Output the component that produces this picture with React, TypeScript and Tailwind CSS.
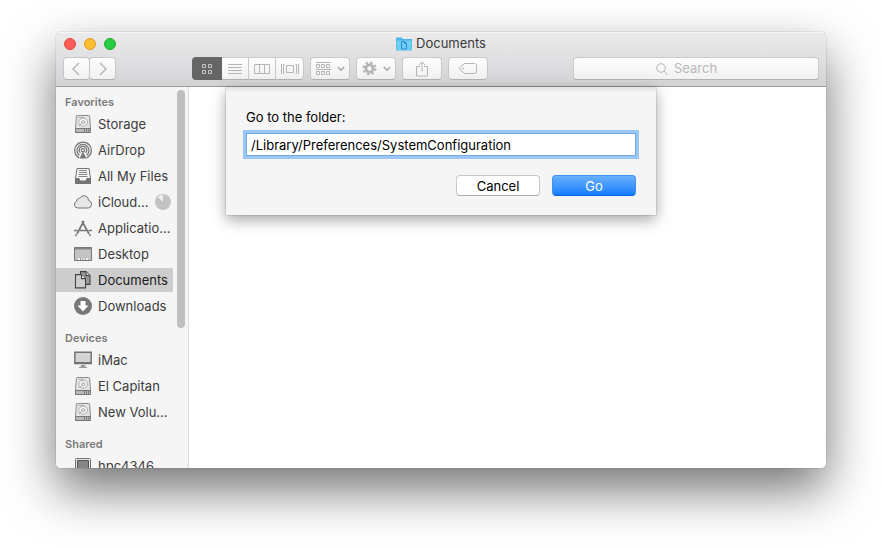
import type { ReactNode } from "react";

const toolButton =
  "flex h-[23px] items-center justify-center rounded-[4px] border border-[#c9c7c9] border-b-[#b4b2b4] bg-linear-to-b from-[#fdfdfd] to-[#f2f1f2] text-[#b5b5b5]";

function Chevron({ d }: { d: string }) {
  return (
    <svg width="16" height="16" viewBox="0 0 16 16" fill="none" stroke="currentColor" strokeWidth="1.4">
      <path d={d} />
    </svg>
  );
}

function ChevronDown() {
  return (
    <svg width="8" height="6" viewBox="0 0 8 6" fill="none" stroke="#a8a8a8" strokeWidth="1.5">
      <path d="M0.8 1L4 4.2L7.2 1" />
    </svg>
  );
}

function GridIcon() {
  return (
    <svg width="12" height="12" viewBox="0 0 12 12" fill="none" stroke="#c8c8c8" strokeWidth="1">
      <path d="M1.5 1.5h3v3h-3zM7.5 1.5h3v3h-3zM1.5 7.5h3v3h-3zM7.5 7.5h3v3h-3z" />
    </svg>
  );
}

function ListIcon() {
  return (
    <svg width="14" height="12" viewBox="0 0 14 12" stroke="currentColor">
      <path d="M0 1.5h14M0 4.5h14M0 7.5h14M0 10.5h14" />
    </svg>
  );
}

function ColumnsIcon() {
  return (
    <svg width="16" height="12" viewBox="0 0 16 12" fill="none" stroke="currentColor">
      <path d="M0.5 1.5h15v9h-15zM5.5 1.5v9M10.5 1.5v9" />
    </svg>
  );
}

function CoverFlowIcon() {
  return (
    <svg width="18" height="12" viewBox="0 0 18 12" fill="none" stroke="currentColor">
      <path d="M5.5 2.5h7v7h-7zM0.5 1v10M2.5 1.5v9M15.5 1.5v9M17.5 1v10M2.5 1.5h1M2.5 10.5h1M15.5 1.5h-1M15.5 10.5h-1" />
    </svg>
  );
}

function ArrangeIcon() {
  return (
    <svg width="15" height="14" viewBox="0 0 15 14" fill="none" stroke="currentColor">
      <path d="M0 0.5h15M0 7.5h15M0.5 2.5h3v3h-3zM5.5 2.5h3v3h-3zM10.5 2.5h3v3h-3zM0.5 9.5h3v3h-3zM5.5 9.5h3v3h-3zM10.5 9.5h3v3h-3z" />
    </svg>
  );
}

function GearIcon() {
  return (
    <svg width="15" height="15" viewBox="0 0 15 15" fill="none" stroke="currentColor">
      <circle cx="7.5" cy="7.5" r="3.600" strokeWidth="2.800" />
      <circle cx="7.5" cy="7.5" r="5.900" strokeWidth="2.200" strokeDasharray="2.317 2.317" />
    </svg>
  );
}

function ShareIcon() {
  return (
    <svg width="12" height="16" viewBox="0 0 12 16" fill="none" stroke="currentColor">
      <path d="M4 5.500H0.500v9.500h11V5.500H8M6 10.500V1M3 4L6 1l3 3" />
    </svg>
  );
}

function TagIcon() {
  return (
    <svg width="18" height="11" viewBox="0 0 18 11" fill="none" stroke="currentColor">
      <path d="M5.500 0.500H15.500a2 2 0 0 1 2 2v6a2 2 0 0 1 -2 2H5.500L1.200 7a2 2 0 0 1 0 -3z" />
      <circle cx="4" cy="5.500" r="0.600" />
    </svg>
  );
}

function FolderIcon() {
  return (
    <svg width="16" height="14" viewBox="0 0 16 14">
      <path d="M0 1.500Q0 0.500 1 0.500h4.500l1.500 1.500H15.500q.5 0 .5.500V13.500H0z" fill="#4bb4e6" />
      <path d="M0.500 3.500h15v9.500h-15z" fill="#70cdf6" />
      <path d="M5.500 4.500h3l2 2v5.500h-5zM8.500 4.500v2h2" fill="none" stroke="#2690cf" />
    </svg>
  );
}

function DiskIcon() {
  return (
    <svg width="18" height="18" viewBox="0 0 18 18" fill="none" stroke="#8a8a8a">
      <path d="M3.200 0.500h11.600q.7 0 .8.700L16.500 13v4.500h-15V13L2.400 1.200q.1-.7.800-.7z" fill="#e4e4e4" />
      <path d="M1.500 13.500h15v4h-15z" fill="#b8b8b8" stroke="#777" />
      <ellipse cx="9.200" cy="7.200" rx="4.400" ry="4" stroke="#b0b0b0" fill="#f3f3f3" />
      <circle cx="9.300" cy="7.200" r="1.400" stroke="#a0a0a0" />
      <path d="M4.500 2.500h5M5 10.800L8 8.500" stroke="#aaa" />
      <path d="M10.500 14v3M12.500 14v3M14.500 14v3" stroke="#808080" />
    </svg>
  );
}

function AirDropIcon() {
  return (
    <svg width="18" height="18" viewBox="0 0 18 18" fill="none" stroke="#777" strokeWidth="1.300">
      <path d="M5.200 16.800A8.300 8.300 0 1 1 12.800 16.800" />
      <path d="M5.400 14.200A6 6 0 1 1 12.600 14.200" />
      <path d="M6.400 11.900A3.800 3.800 0 1 1 11.600 11.900" />
      <circle cx="9" cy="9.200" r="1.600" />
      <path d="M9 10.500L5.500 17.500h7z" fill="#777" stroke="none" />
    </svg>
  );
}

function TrayIcon() {
  return (
    <svg width="18" height="18" viewBox="0 0 18 18" fill="none" stroke="#737373">
      <path d="M3 1.500h12l1.500 10v5h-15v-5z" fill="#f5f5f5" />
      <path d="M5 3.500h8M4.800 5.500h8.400M4.600 7.500h8.800M4.400 9.500h9.200" stroke="#888" />
      <path d="M1.500 11.500h3.500l1 2.500h6l1-2.500h3.500v5h-15z" fill="#737373" />
    </svg>
  );
}

function CloudIcon() {
  return (
    <svg width="18" height="18" viewBox="0 0 18 18" fill="#e6e6e6" stroke="#777">
      <path d="M4 15a3.500 3.500 0 0 1-1.200-6.800a2.500 2.500 0 0 1 2.900-2.900a4.700 4.700 0 0 1 8.900 2.200a3.800 3.800 0 0 1 -.4 7.500z" />
    </svg>
  );
}

function ApplicationsIcon() {
  return (
    <svg width="18" height="18" viewBox="0 0 18 18" fill="none" stroke="#777" strokeWidth="1.700">
      <path d="M3 15L9.800 2M8 2l7 13M0 11.500h3.500M6 11.500h6M14.500 11.500H18M1.500 17l1-1.500M16.500 17l-1-1.500" />
    </svg>
  );
}

function DesktopIcon() {
  return (
    <svg width="18" height="18" viewBox="0 0 18 18">
      <path d="M0.500 2.500h17v13h-17z" fill="#c3c3c3" stroke="#777" />
      <path d="M1 3h16v1.500H1z" fill="#858585" />
      <path d="M4 13h10v2H4z" fill="#f2f2f2" />
      <path d="M6.500 13v2M9 13v2M11.500 13v2" stroke="#999" />
    </svg>
  );
}

function DocumentsIcon() {
  return (
    <svg width="18" height="18" viewBox="0 0 18 18" stroke="#444" strokeWidth="1.100">
      <path d="M6.500 0.600h5.500l4 4v8.800h-9.500z" fill="#999" />
      <path d="M12 0.600v4h4" fill="#ccc" />
      <path d="M1.500 3.600h6l4 4v9.300h-10z" fill="#cecece" />
      <path d="M7.500 3.600v4h4" fill="#e4e4e4" />
    </svg>
  );
}

function DownloadsIcon() {
  return (
    <svg width="18" height="18" viewBox="0 0 18 18">
      <circle cx="9" cy="9" r="9" fill="#787878" />
      <path d="M6.500 4h5v4.500h3L9 14.500L3.500 8.500h3z" fill="#fff" />
    </svg>
  );
}

function IMacIcon() {
  return (
    <svg width="18" height="18" viewBox="0 0 18 18">
      <path d="M0.800 1.300h16.400v11.200H0.800z" fill="#d4d4d4" stroke="#737373" strokeWidth="1.500" />
      <path d="M1 11h16v2H1z" fill="#737373" />
      <path d="M7 14h4l.5 2H13v1H5v-1h1.500z" fill="#999" />
    </svg>
  );
}

function PcIcon() {
  return (
    <svg width="18" height="18" viewBox="0 0 18 18">
      <rect x="1.500" y="1.500" width="15" height="14" rx="1" fill="#e6e6e6" stroke="#737373" />
      <path d="M3.500 3.500h11v10h-11z" fill="#858585" stroke="#555" />
    </svg>
  );
}

function ProgressPie() {
  return (
    <svg className="ml-auto mr-0.5" width="16" height="16" viewBox="0 0 16 16">
      <circle cx="8" cy="8" r="8" fill="#c3c3c3" />
      <path d="M8 8V1A7 7 0 0 0 3 3z" fill="#efefef" />
    </svg>
  );
}

type Item = { label: string; icon: ReactNode; selected?: boolean; extra?: ReactNode };

const sections: { title: string; items: Item[] }[] = [
  {
    title: "Favorites",
    items: [
      { label: "Storage", icon: <DiskIcon /> },
      { label: "AirDrop", icon: <AirDropIcon /> },
      { label: "All My Files", icon: <TrayIcon /> },
      { label: "iCloud...", icon: <CloudIcon />, extra: <ProgressPie /> },
      { label: "Applicatio...", icon: <ApplicationsIcon /> },
      { label: "Desktop", icon: <DesktopIcon /> },
      { label: "Documents", icon: <DocumentsIcon />, selected: true },
      { label: "Downloads", icon: <DownloadsIcon /> },
    ],
  },
  {
    title: "Devices",
    items: [
      { label: "iMac", icon: <IMacIcon /> },
      { label: "El Capitan", icon: <DiskIcon /> },
      { label: "New Volu...", icon: <DiskIcon /> },
    ],
  },
  { title: "Shared", items: [{ label: "hpc4346", icon: <PcIcon /> }] },
];

function Toolbar() {
  return (
    <header className="shrink-0 border-b border-[#9b999b] bg-linear-to-b from-[#ecebec] to-[#d4d2d5] shadow-[inset_0_1px_0_#f7f6f7]">
      <div className="grid h-6 grid-cols-[1fr_auto_1fr] items-center px-2">
        <div className="flex gap-2">
          <button aria-label="Close" className="size-3 rounded-full border border-[#e2443f] bg-[#fd5c57]" />
          <button aria-label="Minimize" className="size-3 rounded-full border border-[#dfa023] bg-[#fdbd2f]" />
          <button aria-label="Zoom" className="size-3 rounded-full border border-[#1aab2c] bg-[#29cb41]" />
        </div>
        <h1 className="flex items-center gap-1 text-[13px] text-[#3a3a3a]">
          <FolderIcon />
          Documents
        </h1>
      </div>
      <div className="flex h-[30px] items-start px-[7px] pt-px">
        <button aria-label="Back" className={`${toolButton} w-[27px]`}>
          <Chevron d="M10 2L4 8l6 6" />
        </button>
        <button aria-label="Forward" className={`${toolButton} -ml-px w-[27px]`}>
          <Chevron d="M5 2l6 6-6 6" />
        </button>
        <div className="ml-[76px] flex">
          <button aria-label="Icon view" className="flex h-[23px] w-[30px] items-center justify-center rounded-l-[4px] bg-[#666566]">
            <GridIcon />
          </button>
          <button aria-label="List view" className={`${toolButton} w-[27px] rounded-none border-l-0`}>
            <ListIcon />
          </button>
          <button aria-label="Column view" className={`${toolButton} w-[27px] rounded-none border-l-0`}>
            <ColumnsIcon />
          </button>
          <button aria-label="Cover Flow view" className={`${toolButton} w-7 rounded-l-none border-l-0`}>
            <CoverFlowIcon />
          </button>
        </div>
        <div className="ml-1.5 flex gap-1.5">
          <button aria-label="Arrange" className={`${toolButton} w-10 gap-1.5`}>
            <ArrangeIcon />
            <ChevronDown />
          </button>
          <button aria-label="Action" className={`${toolButton} w-10 gap-1.5`}>
            <GearIcon />
            <ChevronDown />
          </button>
          <button aria-label="Share" className={`${toolButton} w-10`}>
            <ShareIcon />
          </button>
          <button aria-label="Edit tags" className={`${toolButton} w-10`}>
            <TagIcon />
          </button>
        </div>
        <label className={`${toolButton} ml-auto w-[246px] gap-1.5 pr-1.5`}>
          <svg width="12" height="12" viewBox="0 0 12 12" fill="none" stroke="currentColor">
            <circle cx="5" cy="5" r="4.300" />
            <path d="M8 8l3.600 3.600" />
          </svg>
          <input
            type="text"
            aria-label="Search"
            placeholder="Search"
            className="w-14 bg-transparent text-[13px] outline-none placeholder:text-[#b8b8b8]"
          />
        </label>
      </div>
    </header>
  );
}

function Sidebar() {
  return (
    <nav className="relative w-[133px] shrink-0 overflow-hidden border-r border-[#dcdcdc] bg-[#f5f5f5] pt-[5px]">
      {sections.map((section) => (
        <section key={section.title} className="mb-2.5">
          <h2 className="flex h-5 items-center pl-[9px] text-[11px] font-semibold text-[#7a7a7a]">{section.title}</h2>
          <ul className="mr-[15px] flex flex-col gap-0.5">
            {section.items.map((item) => (
              <li key={item.label}>
                <a
                  href="#"
                  className={`flex h-6 items-center gap-1.5 pl-[18px] text-[13px] whitespace-nowrap ${
                    item.selected ? "bg-[#cdcdcd] text-[#1a1a1a]" : "text-[#3c3c3c]"
                  }`}
                >
                  {item.icon}
                  <span className="pt-0.5">{item.label}</span>
                  {item.extra}
                </a>
              </li>
            ))}
          </ul>
        </section>
      ))}
      <div className="absolute top-[3px] right-[3px] h-[238px] w-2 rounded-full bg-[#bfbfbf]" />
    </nav>
  );
}

function GoToFolder() {
  return (
    <form
      onSubmit={(event) => event.preventDefault()}
      className="absolute top-0 left-1/2 w-[430px] -translate-x-1/2 bg-[#f5f5f5] bg-linear-to-b from-[#e2e2e2] to-[#f5f5f5] to-[6px] px-5 pt-5 pb-[19px] text-[13px] text-black shadow-[0_0_1px_rgba(0,0,0,0.5),0_5px_14px_rgba(0,0,0,0.35)]"
    >
      <label htmlFor="folder" className="block leading-5">
        Go to the folder:
      </label>
      <input
        id="folder"
        type="text"
        defaultValue="/Library/Preferences/SystemConfiguration"
        className="mt-1.5 block h-[23px] w-full border border-[#73a7e3] bg-white px-1 ring-3 ring-[#9bc7f7] outline-none"
      />
      <div className="mt-[19px] flex justify-end gap-3">
        <button type="button" className="h-[21px] w-[84px] rounded-[4px] border border-[#c8c8c8] border-b-[#acacac] bg-white leading-4">
          Cancel
        </button>
        <button
          type="submit"
          className="h-[21px] w-[84px] rounded-[4px] border border-[#3d93f0] border-b-[#0a65dd] bg-linear-to-b from-[#69b1fa] to-[#0d7dff] leading-4 text-white"
        >
          Go
        </button>
      </div>
    </form>
  );
}

export default function App() {
  return (
    <div className="min-h-screen overflow-hidden bg-white px-14 pt-8 pb-20 font-['Inter','Liberation_Sans',sans-serif]">
      <div className="rounded-[5px] shadow-[0_0_1px_rgba(0,0,0,0.6),0_22px_50px_rgba(0,0,0,0.55)]">
        <div className="flex h-[calc(100vh-112px)] flex-col overflow-hidden rounded-[5px] bg-white">
          <Toolbar />
          <div className="relative flex min-h-0 flex-1">
            <Sidebar />
            <main className="flex-1 bg-white" />
            <GoToFolder />
          </div>
        </div>
      </div>
    </div>
  );
}
